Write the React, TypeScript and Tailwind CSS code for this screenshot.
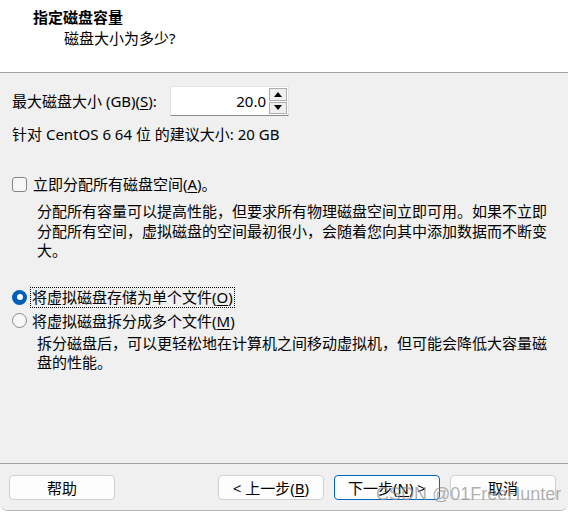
import type { ReactNode } from 'react';

function Key({ children }: { children: ReactNode }) {
  return <span className="underline underline-offset-[2px] decoration-[1px]">{children}</span>;
}

function Spinner() {
  return (
    <div className="flex w-[19px] flex-col gap-[1px] py-[1px] pr-[1px]">
      <div className="flex h-[13px] items-center justify-center border border-[#adadad] bg-[#efefef]">
        <svg width="8" height="5" viewBox="0 0 8 5">
          <path d="M0 5 L4 0 L8 5 Z" fill="#000" />
        </svg>
      </div>
      <div className="flex h-[13px] items-center justify-center border border-[#adadad] bg-[#efefef]">
        <svg width="8" height="5" viewBox="0 0 8 5">
          <path d="M0 0 L8 0 L4 5 Z" fill="#000" />
        </svg>
      </div>
    </div>
  );
}

function WizardButton({ children, primary }: { children: ReactNode; primary?: boolean }) {
  return (
    <button
      type="button"
      className={[
        'flex h-[25px] w-[106px] items-center justify-center rounded-[4px] border bg-[#fdfdfd] text-[15px] leading-[20px] text-black',
        primary ? 'border-[#0067c0]' : 'border-[#d0d0d0]',
      ].join(' ')}
    >
      {children}
    </button>
  );
}

export default function App() {
  return (
    <div className="relative h-[512px] w-[568px] overflow-hidden bg-white font-['Noto_Sans','Noto_Sans_CJK_SC',sans-serif] text-[15px] text-black">
      <div className="flex h-[511px] flex-col overflow-hidden rounded-b-[8px] border-b border-[#b5b5b5]">
        <div className="h-[73px] border-b border-[#a0a0a0] bg-white pl-[33px] pt-[7px]">
          <div className="font-bold leading-[20px]">指定磁盘容量</div>
          <div className="mt-[1px] pl-[31px] leading-[20px]">磁盘大小为多少?</div>
        </div>

        <div className="flex-1 border-b border-[#a0a0a0] bg-[#f0f0f0] pl-[12px] pt-[13px]">
          <div className="flex h-[30px] items-center">
            <label className="w-[158px] leading-[20px]">
              最大磁盘大小 (GB)(<Key>S</Key>):
            </label>
            <div className="flex h-[30px] w-[119px] border border-[#e3e3e3] border-b-[#8a8a8a] bg-white">
              <div className="flex flex-1 items-center justify-end pr-[3px] leading-[20px]">20.0</div>
              <Spinner />
            </div>
          </div>

          <p className="mt-[8px] leading-[20px]">针对 CentOS 6 64 位 的建议大小: 20 GB</p>

          <div className="mt-[30px] flex h-[20px] items-center gap-[6px]">
            <span className="h-[15px] w-[15px] rounded-[3px] border border-[#858585] bg-[#f7f7f7]" />
            <span className="leading-[20px]">
              立即分配所有磁盘空间(<Key>A</Key>)。
            </span>
          </div>
          <p className="ml-[25px] mt-[8px] w-[515px] leading-[19.5px]">
            分配所有容量可以提高性能，但要求所有物理磁盘空间立即可用。如果不立即分配所有空间，虚拟磁盘的空间最初很小，会随着您向其中添加数据而不断变大。
          </p>

          <div className="mt-[26px] flex h-[21px] items-center">
            <span className="flex h-[15px] w-[15px] items-center justify-center rounded-full bg-[#005fb8]">
              <span className="h-[6px] w-[6px] rounded-full bg-white" />
            </span>
            <span className="ml-[3px] border border-dotted border-black px-[1px] leading-[19px]">
              将虚拟磁盘存储为单个文件(<Key>O</Key>)
            </span>
          </div>
          <div className="mt-[3px] flex h-[20px] items-center">
            <span className="h-[15px] w-[15px] rounded-full border border-[#8a8a8a] bg-[#f7f7f7]" />
            <span className="ml-[5px] leading-[20px]">
              将虚拟磁盘拆分成多个文件(<Key>M</Key>)
            </span>
          </div>
          <p className="ml-[25px] mt-[3px] w-[515px] leading-[19.5px]">
            拆分磁盘后，可以更轻松地在计算机之间移动虚拟机，但可能会降低大容量磁盘的性能。
          </p>
        </div>

        <div className="flex h-[46px] bg-[#f0f0f0] pl-[9px] pr-[12px] pt-[11px]">
          <WizardButton>帮助</WizardButton>
          <div className="ml-auto flex gap-[10px]">
            <WizardButton>
              &lt; 上一步(<Key>B</Key>)
            </WizardButton>
            <WizardButton primary>
              下一步(<Key>N</Key>) &gt;
            </WizardButton>
            <WizardButton>取消</WizardButton>
          </div>
        </div>
      </div>

      <div className="absolute left-[376px] top-[483px] font-['Liberation_Sans',sans-serif] text-[18px] leading-[22px] text-[#8f8f8f]/70">
        CSDN @01FreeHunter
      </div>
    </div>
  );
}
